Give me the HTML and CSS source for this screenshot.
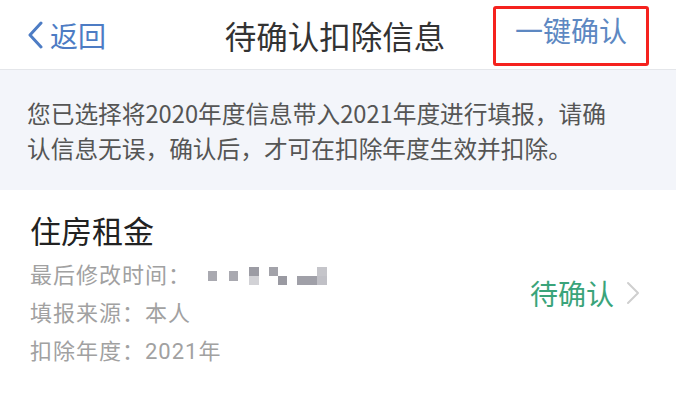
FILE: index.html
```html
<!DOCTYPE html>
<html>
  <head>
    <meta charset="UTF-8" />
    <title>待确认扣除信息</title>
    <link rel="stylesheet" href="styles.css">
  </head>
  <body>
    <div class="navbar">
      <div class="nav-back">
        <svg class="back-icon" width="18" height="28" viewBox="0 0 18 28">
          <path d="M15 2 L4 14 L15 26" fill="none" stroke="#4d7cc4" stroke-width="3" stroke-linecap="round" stroke-linejoin="round" />
        </svg>
        <span>返回</span>
      </div>
      <div class="nav-title">待确认扣除信息</div>
      <div class="nav-action">
        <span>一键确认</span>
      </div>
    </div>

    <div class="notice">
      您已选择将2020年度信息带入2021年度进行填报，请确<br>认信息无误，确认后，才可在扣除年度生效并扣除。
    </div>

    <div class="item">
      <div class="item-info">
        <div class="item-title">住房租金</div>
        <div class="item-meta">
          最后修改时间：
          <span class="blur">
            <i class="px a"></i><i class="px b"></i><i class="px c"></i><i class="px d"></i><i class="px e"></i>
          </span>
        </div>
        <div class="item-meta">填报来源：本人</div>
        <div class="item-meta">扣除年度：2021年</div>
      </div>
      <div class="item-status">
        <span>待确认</span>
        <svg width="14" height="24" viewBox="0 0 14 24">
          <path d="M2 2 L12 12 L2 22" fill="none" stroke="#cfcfcf" stroke-width="2" stroke-linecap="round" stroke-linejoin="round" />
        </svg>
      </div>
    </div>
  </body>
</html>
```

FILE: styles.css
```css
body {
  margin: 0;
  width: 684px;
  height: 396px;
  overflow: hidden;
  background-color: #fff;
  font-family: "Noto Sans CJK SC", "Noto Sans", sans-serif;
}

.navbar {
  display: flex;
  align-items: center;
  height: 70px;
  margin-right: 8px;
  border-bottom: 1px solid #e4e6ea;
  box-sizing: border-box;
}

.nav-back {
  display: flex;
  align-items: center;
  box-sizing: border-box;
  padding-left: 26px;
  width: 170px;
  color: #4d7cc4;
  font-size: 28px;
}

.back-icon {
  margin-right: 6px;
}

.nav-title {
  flex: 1;
  text-align: center;
  font-size: 31.5px;
  color: #333;
  padding-left: 7px;
}

.nav-action {
  align-self: flex-start;
  width: 150px;
  height: 54px;
  margin-top: 6px;
  margin-right: 27px;
  border: 3px solid #f5221e;
  border-radius: 3px;
  display: flex;
  justify-content: center;
  color: #5d88c2;
  font-size: 28px;
  line-height: 42px;
}

.notice {
  background-color: #f3f5fa;
  margin-right: 8px;
  padding: 26px 0 0 27px;
  height: 94px;
  font-size: 23.7px;
  line-height: 35px;
  color: #555;
}

.item {
  display: flex;
  align-items: center;
  padding: 18px 44px 0 30px;
}

.item-info {
  flex: 1;
}

.item-title {
  font-size: 31px;
  line-height: 44px;
  color: #222;
  margin-bottom: 5px;
}

.item-meta {
  display: flex;
  align-items: center;
  font-family: "Roboto", "Noto Sans CJK SC", sans-serif;
  font-size: 22px;
  letter-spacing: 1px;
  line-height: 38px;
  color: #a1a1a1;
}

.blur {
  display: flex;
  align-items: center;
  margin-left: 17px;
  height: 20px;
}

.px {
  display: inline-block;
  height: 10px;
  background-color: #a9a9b0;
}

.px.a { width: 9px; margin-right: 12px; }
.px.b { width: 9px; margin-right: 11px; }
.px.c { width: 10px; height: 18px; margin-right: 10px; background: linear-gradient(#9c9ca4 50%, #d2d2d6 50%); }
.px.d { width: 18px; height: 18px; margin-right: 10px; background: linear-gradient(90deg, #a3a3aa 50%, transparent 50%) top / 100% 50% no-repeat, linear-gradient(90deg, transparent 50%, #9a9aa2 50%) bottom / 100% 50% no-repeat; }
.px.e { width: 30px; height: 18px; background: linear-gradient(90deg, transparent 66%, #c5c5ca 66%) top / 100% 50% no-repeat, linear-gradient(90deg, #a0a0a8 66%, #c0c0c6 66%) bottom / 100% 50% no-repeat; }

.item-status {
  display: flex;
  align-items: center;
  color: #3aa47a;
  font-size: 28px;
  margin-top: 6px;
}

.item-status svg {
  margin-left: 12px;
}
```
